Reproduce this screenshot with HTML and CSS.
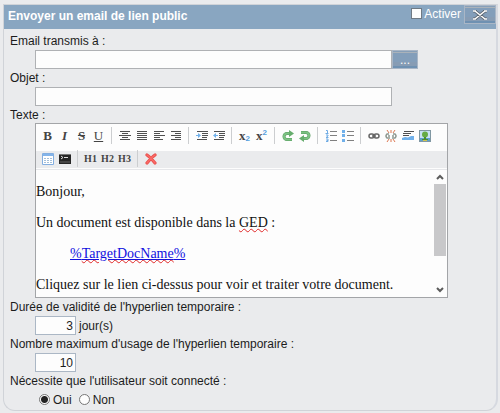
FILE: index.html
```html
<!DOCTYPE html>
<html lang="fr">
<head>
<meta charset="utf-8">
<title>Envoyer un email de lien public</title>
<link rel="stylesheet" href="styles.css">
</head>
<body>
<form class="panel">
  <header class="panel-head">
    <h1 class="title">Envoyer un email de lien public</h1>
    <label class="activate"><input type="checkbox" class="check">Activer</label>
    <button type="button" class="btn close" aria-label="Fermer">
      <svg width="16" height="10" viewBox="0 0 16 10"><path d="M1 1h4M11 1h4M1 9h4M11 9h4M3 1l10 8M13 1L3 9" stroke="#5d6670" stroke-width="3" fill="none"/><path d="M1 1h3M12 1h3M1 9h3M12 9h3M3 1l10 8M13 1L3 9" stroke="#fff" stroke-width="1.6" fill="none"/></svg>
    </button>
  </header>
  <div class="fields">
    <label class="label" for="to">Email transmis à :</label>
    <div class="field"><input id="to" type="text" class="text"><button type="button" class="btn browse">...</button></div>
    <label class="label" for="subject">Objet :</label>
    <div class="field"><input id="subject" type="text" class="text"></div>
    <span class="label" id="body-label">Texte :</span>
    <div class="editor">
      <div class="toolbar">
        <div class="tools">
          <button type="button" class="tool bold">B</button>
          <button type="button" class="tool italic">I</button>
          <button type="button" class="tool strike">S</button>
          <button type="button" class="tool under">U</button>
          <i class="sep"></i>
          <button type="button" class="tool" aria-label="Centrer"><svg class="lines" viewBox="0 0 12 12"><path d="M1 1.500h10M3 3.500h6M0 5.500h12M3 7.500h6M1 9.500h10"/></svg></button>
          <button type="button" class="tool" aria-label="Justifier"><svg class="lines" viewBox="0 0 12 12"><path d="M1 1.500h10M1 3.500h10M1 5.500h10M1 7.500h10M1 9.500h10"/></svg></button>
          <button type="button" class="tool" aria-label="Gauche"><svg class="lines" viewBox="0 0 12 12"><path d="M1 1.500h10M1 3.500h6M1 5.500h11M1 7.500h6M1 9.500h9"/></svg></button>
          <button type="button" class="tool" aria-label="Droite"><svg class="lines" viewBox="0 0 12 12"><path d="M1 1.500h10M5 3.500h6M1 5.500h10M5 7.500h6M1 9.500h10"/></svg></button>
          <i class="sep"></i>
          <button type="button" class="tool" aria-label="Augmenter le retrait"><svg class="lines" viewBox="0 0 12 12"><path d="M1 1.500h11M6 3.500h6M6 5.500h6M6 7.500h5M1 9.500h10"/><path class="blue" d="M0 5h2V3l3 2.500L2 8V6H0z"/></svg></button>
          <button type="button" class="tool" aria-label="Diminuer le retrait"><svg class="lines" viewBox="0 0 12 12"><path d="M1 1.500h11M6 3.500h6M6 5.500h6M6 7.500h5M1 9.500h10"/><path class="blue" d="M5 5H3V3L0 5.500 3 8V6h2z"/></svg></button>
          <i class="sep"></i>
          <button type="button" class="tool script">x<sub>2</sub></button>
          <button type="button" class="tool script">x<sup>2</sup></button>
          <i class="sep"></i>
          <button type="button" class="tool" aria-label="Rétablir"><svg class="arrow" viewBox="0 0 12 12"><path class="edge" d="M10 9.500H5a3 3 0 0 1 0-6h3"/><path class="fill" d="M10 9.500H5a3 3 0 0 1 0-6h3"/><path class="head" d="M7 0l5 3.500L7 7z"/></svg></button>
          <button type="button" class="tool" aria-label="Annuler"><svg class="arrow" viewBox="0 0 12 12"><path class="edge" d="M2 2.500h5a3 3 0 0 1 0 6H4"/><path class="fill" d="M2 2.500h5a3 3 0 0 1 0 6H4"/><path class="head" d="M5 5L0 8.500 5 12z"/></svg></button>
          <i class="sep"></i>
          <button type="button" class="tool" aria-label="Liste numérotée"><svg class="lines" viewBox="0 0 12 12"><path class="thin" d="M5 1.500h7M5 5.500h7M5 10.500h7"/><path class="num" d="M1 .500h1.500V3M.500 3.500h3M1 5h2v1L1 7.500h2.500M1 9h2v2.500H1M1.500 10.500H3"/></svg></button>
          <button type="button" class="tool" aria-label="Liste à puces"><svg class="lines" viewBox="0 0 12 12"><path class="thin" d="M5 1.500h7M5 5.500h7M5 10.500h7"/><path class="blue" d="M0 0h3v3H0zM0 4h3v3H0zM0 9h3v3H0z"/></svg></button>
          <i class="sep"></i>
          <button type="button" class="tool" aria-label="Lien"><svg viewBox="0 0 12 12" class="chain"><rect x="1" y="4" width="5" height="4" rx="2"/><rect x="6" y="4" width="5" height="4" rx="2"/><path d="M4 6h4"/></svg></button>
          <button type="button" class="tool" aria-label="Supprimer le lien"><svg viewBox="0 0 12 12" class="chain"><path class="pale" d="M4 4H2Q0 6 2 8h3M8 4h2q2 2 0 4H7M3 6h2M7 6h2"/><path class="spark" d="M2 0l2 3M6 0v3M10 0L8 3M2 12l2-3M6 12V9M10 12L8 9"/></svg></button>
          <button type="button" class="tool" aria-label="Ligne"><svg class="lines" viewBox="0 0 12 12"><path d="M2 1.500h10M1 3.500h8M1 5.500h6"/><path class="blue" d="M0 8l3-1 3 .500L9 6h3v4H0z"/></svg></button>
          <button type="button" class="tool" aria-label="Image"><svg viewBox="0 0 12 12"><path fill="#8198a3" d="M0 0h12v12H0z"/><path fill="#c8e2f4" d="M1 1h10v7H1z"/><path fill="#5e9fca" d="M1 8h10v3H1z"/><circle cx="6" cy="4.500" r="3" fill="#65ac44"/><path fill="#4a8f2c" d="M5 7h2v2h2v1H3V9h2z"/><path fill="#d2c64e" d="M4 10h4v1H4z"/></svg></button>
        </div>
        <div class="tools">
          <button type="button" class="tool" aria-label="Tableau"><svg viewBox="0 0 12 12"><path fill="#fff" stroke="#83aee0" d="M.500.500h11v11H.500z"/><path fill="#83b4ea" d="M1 1h10v2H1z"/><path d="M2 5.500h8M2 7.500h8M2 9.500h8" stroke="#a5bfd9" stroke-dasharray="2 1"/></svg></button>
          <button type="button" class="tool" aria-label="Source"><svg viewBox="0 0 12 12"><path fill="#252525" d="M0 1h12v10H0z"/><path fill="#777" d="M0 1h12v1H0z"/><path d="M2 3l2 1.500L2 6M5 4.500h4" stroke="#ddd" fill="none"/><path fill="#444" d="M1 8h10v2H1z"/></svg></button>
          <i class="sep"></i>
          <button type="button" class="tool heading">H1</button>
          <button type="button" class="tool heading">H2</button>
          <button type="button" class="tool heading">H3</button>
          <i class="sep"></i>
          <button type="button" class="tool" aria-label="Effacer"><svg viewBox="0 0 12 12"><path d="M2 2q3 2 8 8M10 2Q7 4 2 10" stroke="#e8504c" stroke-width="3.200" stroke-linecap="round" fill="none"/><path d="M2 2q3 2 8 8M10 2Q7 4 2 10" stroke="#fb6b68" stroke-width="1.500" stroke-linecap="round" fill="none"/></svg></button>
        </div>
      </div>
      <div class="document">
        <div class="content" role="textbox" aria-multiline="true" aria-labelledby="body-label" contenteditable="true" spellcheck="false">
          <p>Bonjour,</p>
          <p>Un document est disponible dans la <span class="typo">GED</span> :</p>
          <p class="indent"><a href="#">%<span class="typo">TargetDocName</span>%</a></p>
          <p>Cliquez sur le lien ci-dessus pour voir et traiter votre document.</p>
        </div>
        <div class="scroll" aria-hidden="true">
          <svg viewBox="0 0 12 14" class="chevron"><path d="M3 9l3-3 3 3"/></svg>
          <div class="thumb"></div>
          <svg viewBox="0 0 12 14" class="chevron"><path d="M3 5l3 3 3-3"/></svg>
        </div>
      </div>
    </div>
    <label class="label" for="days">Durée de validité de l'hyperlien temporaire :</label>
    <div class="field"><input id="days" type="text" class="text number" value="3"><span class="unit">jour(s)</span></div>
    <label class="label" for="uses">Nombre maximum d'usage de l'hyperlien temporaire :</label>
    <div class="field"><input id="uses" type="text" class="text number" value="10"></div>
    <span class="label" id="login-label">Nécessite que l'utilisateur soit connecté :</span>
    <div class="field radios" role="radiogroup" aria-labelledby="login-label">
      <label class="choice"><input type="radio" name="login" class="radio" checked>Oui</label>
      <label class="choice"><input type="radio" name="login" class="radio">Non</label>
    </div>
  </div>
</form>
</body>
</html>
```
FILE: styles.css
```css
* { box-sizing: border-box; }
body {
  margin: 0;
  padding: 4px 2px 1px 3px;
  background: #eaebed;
  color: #1c1c1c;
  font: 12px/18px "Liberation Sans", Arial, sans-serif;
}
button, input { font: inherit; color: inherit; }
svg { display: block; width: 12px; height: 12px; }
.panel {
  border: 1px solid #d0d3d8;
  border-right: 2px solid #d6d9e0;
  border-radius: 0 0 12px 12px;
  padding-bottom: 1px;
}
.panel-head {
  display: flex;
  align-items: flex-start;
  height: 24px;
  padding-left: 4px;
  background: #89a6c1;
  color: #fff;
}
.title { flex: 1; margin: 0; font-size: 12px; line-height: 22px; }
.activate { display: flex; align-items: center; gap: 2px; padding-right: 3px; }
.check {
  appearance: none;
  width: 11px;
  height: 11px;
  margin: 0 0 2px;
  border: 1px solid #6f7a84;
  background: #fdfdfd;
}
.btn {
  display: flex;
  align-items: center;
  justify-content: center;
  height: 19px;
  padding: 0;
  border: 1px solid #a9b6c6;
  border-radius: 0;
  background: linear-gradient(#879fb8 0 1px, #aab2ba 1px 2px, #839eba 2px 11px, #879cb4 11px 15px, #6f91b2 15px);
  color: #fff;
}
.close { width: 32px; }
.close svg { width: 16px; height: 10px; }
.browse { width: 26px; }
.fields { padding: 3px 6px 0; }
.label { display: block; height: 18px; line-height: 18px; }
.field { display: flex; align-items: center; height: 19px; margin-left: 25px; }
.text {
  width: 100%;
  max-width: 357px;
  height: 19px;
  padding: 0 2px;
  border: 1px solid #afb1b4;
  background: #fdfdfd;
}
.number { width: 41px; text-align: right; border-color: #abb7c5; }
.unit { margin-left: 3px; }
.editor {
  max-width: 413px;
  margin: -1px 0 0 25px;
  border: 1px solid #a3a5a8;
  background: #fdfdfd;
}
.toolbar {
  padding-left: 3px;
  background: linear-gradient(#fdfdfd 27px, #eaebed 27px 44px, #fdfdfd 44px 45px, #e6e7ea 45px);
}
.tools { display: flex; align-items: center; height: 23px; }
.tool {
  display: flex;
  align-items: center;
  justify-content: center;
  width: 17px;
  height: 22px;
  padding: 0;
  border: 0;
  background: none;
  color: #444;
  font: 13px/16px "Liberation Serif", serif;
}
.sep { width: 1px; height: 17px; margin: 0 4px; background: #ccced0; }
.bold { font-weight: bold; }
.italic { font-style: italic; font-weight: bold; }
.strike { text-decoration: line-through; font-weight: bold; }
.under { text-decoration: underline; }
.script { font-weight: bold; }
.script sub, .script sup { color: #55a0dd; font: bold 8px/8px "Liberation Sans", sans-serif; }
.script sub { padding-top: 6px; }
.script sup { padding-bottom: 6px; }
.heading { font-size: 10px; font-weight: bold; }
.lines path { fill: none; stroke: #505050; }
.lines .thin { stroke: #808080; }
.lines .num { stroke: #70ace4; }
.lines .blue { fill: #70b0ea; stroke: none; }
.arrow path { fill: none; stroke-width: 2; }
.arrow .edge { stroke: #559c5d; stroke-width: 3; }
.arrow .fill { stroke: #7cc183; }
.arrow .head { fill: #66ad6d; stroke: none; }
.chain { fill: none; stroke: #666; stroke-width: 1.5; }
.chain .pale { stroke: #8d9890; }
.chain .spark { stroke: #dc7650; stroke-width: 1; }
.document { display: flex; height: 127px; }
.content {
  flex: 1;
  overflow: hidden;
  color: #111;
  font: 14px/16px "Liberation Serif", "Times New Roman", serif;
  outline: none;
}
.content p { margin: 14px 0 15px; }
.content .indent { padding-left: 34px; }
.content a { color: #1010e0; }
.typo { text-decoration: underline wavy #e02828 1px; text-underline-offset: 1px; }
.scroll { display: flex; flex-direction: column; width: 12px; margin-right: 1px; }
.chevron { height: 14px; fill: none; stroke: #5c5c5c; stroke-width: 2; }
.thumb { height: 72px; margin-bottom: auto; background: #c8c8ca; }
.radios { gap: 7px; margin-left: 29px; }
.choice { display: flex; align-items: center; gap: 3px; }
.radio {
  appearance: none;
  width: 11px;
  height: 11px;
  margin: 0;
  border: 1px solid #777;
  border-radius: 50%;
  background: #fdfdfd;
}
.radio:checked { background: radial-gradient(circle, #222 3px, #fdfdfd 4px); }
```
